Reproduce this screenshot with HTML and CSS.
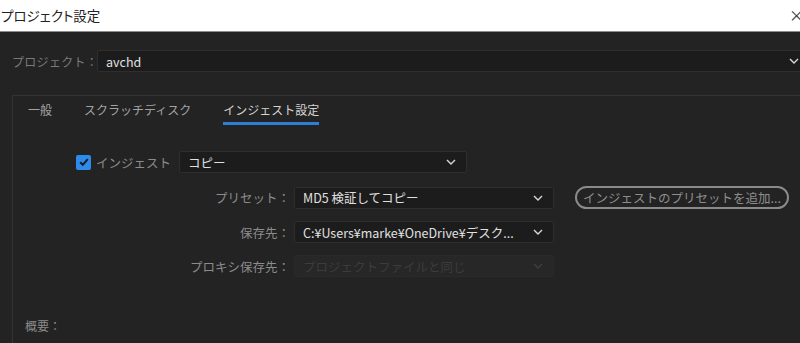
FILE: index.html
```html
<!DOCTYPE html>
<html lang="ja">
<head>
    <meta charset="UTF-8">
    <title>プロジェクト設定</title>
    <link rel="stylesheet" href="styles.css">
</head>
<body>
    <div class="titlebar">
        <span class="title">プロジェクト設定</span>
        <span class="close">×</span>
    </div>

    <div class="dialog">
        <div class="project-row">
            <span class="project-label">プロジェクト：</span>
            <div class="select project-select">
                <span>avchd</span>
                <svg class="chev" viewBox="0 0 10 6"><path d="M1 1l4 4 4-4"/></svg>
            </div>
        </div>

        <div class="panel">
            <div class="tabs">
                <span class="tab">一般</span>
                <span class="tab">スクラッチディスク</span>
                <span class="tab active">インジェスト設定</span>
            </div>

            <div class="ingest-row">
                <label class="check">
                    <span class="box">
                        <svg viewBox="0 0 12 12"><path d="M2.2 6.2l2.6 2.6 5-5.6"/></svg>
                    </span>
                    インジェスト
                </label>
                <div class="select ingest-select">
                    <span>コピー</span>
                    <svg class="chev" viewBox="0 0 10 6"><path d="M1 1l4 4 4-4"/></svg>
                </div>
            </div>

            <div class="form">
                <div class="row">
                    <span class="label">プリセット：</span>
                    <div class="select field">
                        <span>MD5 検証してコピー</span>
                        <svg class="chev" viewBox="0 0 10 6"><path d="M1 1l4 4 4-4"/></svg>
                    </div>
                    <button class="add-btn">インジェストのプリセットを追加...</button>
                </div>
                <div class="row">
                    <span class="label">保存先：</span>
                    <div class="select field">
                        <span>C:¥Users¥marke¥OneDrive¥デスク...</span>
                        <svg class="chev" viewBox="0 0 10 6"><path d="M1 1l4 4 4-4"/></svg>
                    </div>
                </div>
                <div class="row">
                    <span class="label">プロキシ保存先：</span>
                    <div class="select field disabled">
                        <span>プロジェクトファイルと同じ</span>
                        <svg class="chev" viewBox="0 0 10 6"><path d="M1 1l4 4 4-4"/></svg>
                    </div>
                </div>
            </div>

            <div class="summary">概要：</div>
        </div>
    </div>
</body>
</html>
```

FILE: styles.css
```css
html, body {
    margin: 0;
    height: 100%;
    overflow: hidden;
}

body {
    font-family: "Noto Sans CJK JP", "Noto Sans", sans-serif;
    font-size: 12px;
    background: #232323;
    color: #9a9a9a;
}

.titlebar {
    height: 31px;
    background: #fff;
    border-bottom: 1px solid #8c8c8c;
    display: flex;
    align-items: center;
    justify-content: space-between;
    padding-left: 1px;
    box-sizing: content-box;
}

.title {
    color: #222;
    font-size: 13.5px;
    font-feature-settings: "palt";
    margin-top: -2px;
}

.close {
    color: #333;
    font-size: 15px;
    margin-right: -4px;
    margin-top: -2px;
}

.dialog {
    padding: 18px 0 0 12px;
}

.project-row {
    display: flex;
    align-items: center;
    margin-right: -10px;
}

.project-label {
    color: #7a7a7a;
    width: 85px;
    flex-shrink: 0;
    white-space: nowrap;
    font-size: 12px;
    letter-spacing: 0.3px;
}

.select {
    display: flex;
    align-items: center;
    justify-content: space-between;
    background: #1c1c1c;
    border: 1px solid #2e2e2e;
    border-radius: 2px;
    color: #e0e0e0;
    font-size: 12.5px;
    box-sizing: border-box;
    padding: 0 10px 0 8px;
    white-space: nowrap;
}

.chev {
    width: 10px;
    height: 6px;
    fill: none;
    stroke: #d8d8d8;
    stroke-width: 1.4;
}

.project-select {
    flex: 1;
    height: 22px;
}

.panel {
    margin-top: 23px;
    border: 1px solid #333;
    border-right: none;
    border-bottom: none;
    height: 260px;
    padding-left: 15px;
}

.tabs {
    display: flex;
    gap: 32px;
    padding-top: 6px;
    align-items: flex-start;
}

.tab {
    color: #a2a2a2;
    font-size: 12px;
    line-height: 16px;
    padding-bottom: 4px;
    border-bottom: 3px solid transparent;
}

.tab.active {
    color: #d4d4d4;
    border-bottom-color: #2d7fd6;
}

.ingest-row {
    display: flex;
    align-items: center;
    margin-top: 26px;
    padding-left: 48px;
}

.check {
    display: flex;
    align-items: center;
    gap: 5px;
    color: #8c8c8c;
    font-size: 12.5px;
    width: 103px;
}

.box {
    width: 15px;
    height: 15px;
    background: #2d8ceb;
    border-radius: 2px;
    display: flex;
    align-items: center;
    justify-content: center;
}

.box svg {
    width: 12px;
    height: 12px;
    fill: none;
    stroke: #101820;
    stroke-width: 2;
}

.ingest-select {
    width: 288px;
    height: 22px;
}

.form {
    display: flex;
    flex-direction: column;
    gap: 12px;
    margin-top: 13px;
}

.row {
    display: flex;
    align-items: center;
}

.label {
    width: 262px;
    text-align: right;
    color: #8c8c8c;
    font-size: 12.5px;
    padding-right: 4px;
}

.field {
    width: 260px;
    height: 22px;
}

.field.disabled {
    background: #272727;
    border-color: #2a2a2a;
    color: #3c3c3c;
}

.field.disabled .chev {
    stroke: #3e3e3e;
}

.add-btn {
    margin-left: 21px;
    height: 23px;
    width: 214px;
    border: 2px solid #8a8a8a;
    border-radius: 12px;
    background: transparent;
    color: #8e8e8e;
    font-family: inherit;
    font-size: 12.5px;
    padding: 0;
    white-space: nowrap;
}

.summary {
    margin-top: 40px;
    color: #8c8c8c;
    font-size: 12px;
    margin-left: -3px;
}
```
